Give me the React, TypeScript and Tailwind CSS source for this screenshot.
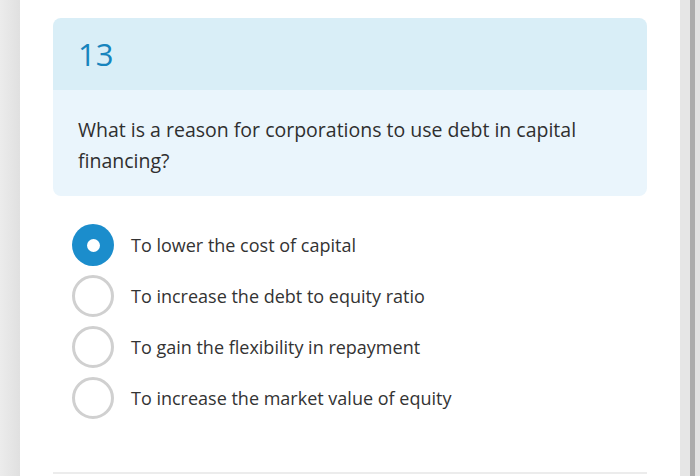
const options = [
  "To lower the cost of capital",
  "To increase the debt to equity ratio",
  "To gain the flexibility in repayment",
  "To increase the market value of equity",
]

export default function App() {
  const selected = 0

  return (
    <div className="flex h-[476px] w-[700px] overflow-hidden bg-white" style={{ fontFamily: "'Open Sans', 'Noto Sans', sans-serif" }}>
      {/* left gutter */}
      <div className="w-[20px] shrink-0 bg-gradient-to-r from-[#ececec] to-[#e0e0e0]" />

      {/* page */}
      <div className="flex flex-1 flex-col px-[33px] pt-[18px]">
        <div className="overflow-hidden rounded-[8px]">
          <div className="flex h-[72px] items-center bg-[#d9eef7] pl-[25px]">
            <span className="pt-[1px] text-[31px] leading-none text-[#1784bd]">13</span>
          </div>
          <div className="h-[106px] bg-[#eaf5fc] px-[25px] pt-[24px] text-[19.5px] leading-[31px] text-[#2f2f2f]">
            What is a reason for corporations to use debt in capital financing?
          </div>
        </div>

        <div className="mt-[28px] flex flex-col gap-[9px] pl-[19px]">
          {options.map((text, i) => (
            <div key={i} className="flex h-[42px] items-center gap-[17px]">
              {i === selected ? (
                <div className="flex h-[42px] w-[42px] items-center justify-center rounded-full bg-[#1b8dcc]">
                  <div className="h-[13px] w-[13px] rounded-full bg-white" />
                </div>
              ) : (
                <div className="h-[42px] w-[42px] rounded-full border-[3px] border-[#d0d0d0] bg-white" />
              )}
              <span className="text-[18px] text-[#333333]">{text}</span>
            </div>
          ))}
        </div>

        <div className="mt-auto mb-[2px] h-[2px] bg-[#ececec]" />
      </div>

      {/* right gutter */}
      <div className="flex w-[20px] shrink-0">
        <div className="w-[10px] bg-[#e6e6e6]" />
        <div className="w-[5px] bg-[#ababab]" />
        <div className="w-[5px] bg-[#e2e2e2]" />
      </div>
    </div>
  )
}
